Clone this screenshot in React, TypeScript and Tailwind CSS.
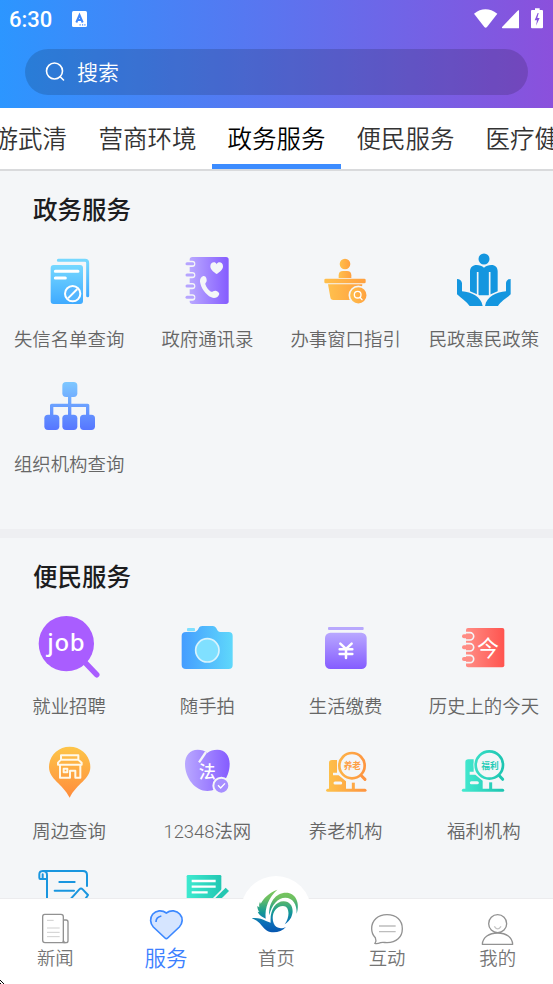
import type { ReactNode } from 'react';

type IconProps = {
  viewBox: string;
  children: ReactNode;
};

type Service = {
  label: string;
  icon: ReactNode;
};

const BG = '#f4f6f8';

const ServiceIcon = ({ viewBox, children }: IconProps) => (
  <svg
    viewBox={viewBox}
    className="size-16 shrink-0"
    fill="none"
  >
    {children}
  </svg>
);

const Gradients = () => (
  <svg
    className="absolute size-0"
    aria-hidden="true"
  >
    <defs>
      <linearGradient id="sky" x1="0" y1="0" x2="0" y2="1">
        <stop offset="0" stopColor="#76d8ff" />
        <stop offset="1" stopColor="#3faaff" />
      </linearGradient>
      <linearGradient id="violet" x1="0" y1="0" x2="1" y2="0">
        <stop offset="0" stopColor="#b9a8ff" />
        <stop offset="1" stopColor="#855cff" />
      </linearGradient>
      <linearGradient id="violetDown" x1="0" y1="0" x2="0" y2="1">
        <stop offset="0" stopColor="#b9a8ff" />
        <stop offset="1" stopColor="#855cff" />
      </linearGradient>
      <linearGradient id="orange" x1="0" y1="0" x2="1" y2="0">
        <stop offset="0" stopColor="#ffc04d" />
        <stop offset="1" stopColor="#ffa03f" />
      </linearGradient>
      <linearGradient id="orangeDown" x1="0" y1="0" x2="0" y2="1">
        <stop offset="0" stopColor="#fdc549" />
        <stop offset="1" stopColor="#ff8c3c" />
      </linearGradient>
      <linearGradient id="orgChart" gradientUnits="userSpaceOnUse" x1="0" y1="66" x2="0" y2="210">
        <stop offset="0" stopColor="#7ec8ff" />
        <stop offset="1" stopColor="#5676ff" />
      </linearGradient>
      <linearGradient id="camera" x1="0" y1="0" x2="1" y2="0">
        <stop offset="0" stopColor="#459dff" />
        <stop offset="1" stopColor="#5fd8fb" />
      </linearGradient>
      <linearGradient id="red" x1="0" y1="0" x2="1" y2="0">
        <stop offset="0" stopColor="#ff8d85" />
        <stop offset="1" stopColor="#ff544f" />
      </linearGradient>
      <linearGradient id="careOrange" gradientUnits="userSpaceOnUse" x1="150" y1="0" x2="270" y2="0">
        <stop offset="0" stopColor="#fdc24b" />
        <stop offset="1" stopColor="#fe9440" />
      </linearGradient>
      <linearGradient id="careTeal" gradientUnits="userSpaceOnUse" x1="558" y1="0" x2="685" y2="0">
        <stop offset="0" stopColor="#45ead0" />
        <stop offset="1" stopColor="#1cc4b0" />
      </linearGradient>
      <linearGradient id="formTeal" gradientUnits="userSpaceOnUse" x1="560" y1="0" x2="688" y2="0">
        <stop offset="0" stopColor="#3eead0" />
        <stop offset="1" stopColor="#1cc0ac" />
      </linearGradient>
      <linearGradient id="logo" gradientUnits="userSpaceOnUse" x1="0" y1="60" x2="0" y2="186">
        <stop offset="0" stopColor="#7cc75c" />
        <stop offset="0.2" stopColor="#6cbf62" />
        <stop offset="0.52" stopColor="#159a94" />
        <stop offset="0.78" stopColor="#0b6fb8" />
        <stop offset="1" stopColor="#0757b0" />
      </linearGradient>
    </defs>
  </svg>
);

const BlacklistIcon = () => (
  <ServiceIcon viewBox="111 207 192 192">
    <path d="M175 241h80q8 0 8 8v98" stroke="url(#sky)" strokeWidth="9" strokeLinecap="round" />
    <rect x="152" y="255" width="97" height="117" rx="9" fill="url(#sky)" />
    <path d="M166 274h68M166 294h30" stroke="#fff" strokeWidth="9" strokeLinecap="round" />
    <circle cx="218" cy="341" r="23" fill="#55b6ff" stroke="#fff" strokeWidth="6" />
    <path d="M204 355l28-28" stroke="#fff" strokeWidth="6" />
  </ServiceIcon>
);

const PhoneBookIcon = () => (
  <ServiceIcon viewBox="526 207 192 192">
    <rect x="570" y="231" width="117" height="141" rx="8" fill="url(#violet)" />
    {[251, 285, 318, 352].map((y) => (
      <g key={y}>
        <rect x="558" y={y - 9} width="29" height="19" rx="9" fill={BG} />
        <path d={`M562 ${y}h17`} stroke="#b6a4ff" strokeWidth="9" strokeLinecap="round" />
      </g>
    ))}
    <path
      d="M651 282c-10-6-19-13-19-23 0-13 15-16 19-6 4-10 19-7 19 6 0 10-9 17-19 23z"
      fill={BG}
    />
    <path
      d="M611 288c7-2 11 8 10 15-1 5-5 6-4 10 3 9 9 17 17 22 5 2 7-4 14-3 7 2 13 7 10 12-4 9-14 12-23 8-18-9-31-28-34-47-1-8 4-15 10-17z"
      fill={BG}
    />
  </ServiceIcon>
);

const CounterIcon = () => (
  <ServiceIcon viewBox="113 207 192 192">
    <g fill="url(#orange)">
      <circle cx="206" cy="252" r="16" />
      <path d="M187 294v-8q0-13 13-13h12q13 0 13 13v8z" />
      <rect x="144" y="296" width="124" height="14" rx="4" />
      <path d="M155 313h103l-5 39q-1 8-9 8h-73q-8 0-9-8z" />
      <circle cx="246" cy="346" r="27" stroke={BG} strokeWidth="5" />
    </g>
    <circle cx="244" cy="344" r="10" stroke="#fff" strokeWidth="4" />
    <path d="M251 352l6 7" stroke="#fff" strokeWidth="4" strokeLinecap="round" />
  </ServiceIcon>
);

const CivilAffairsIcon = () => (
  <ServiceIcon viewBox="528 207 192 192">
    <g fill="#1496df">
      <circle cx="624" cy="237" r="16.500" />
      <path d="M582 334v-60c0-12 8-19 20-19 9 0 16 3 22 8 6-5 13-8 22-8 12 0 19 7 19 19v60l-19 8-9 4h-27l-9-4z" />
      <path d="M543 297q12 0 15 12v25c28 2 57 15 62 44h-39c-10-13-24-22-38-35z" />
      <path d="M704 297q-12 0-14 12v25c-28 2-58 15-63 44h39c8-14 24-22 38-35z" />
    </g>
    <path d="M605 276v70M641 276v70" stroke={BG} strokeWidth="5" />
  </ServiceIcon>
);

const OrgIcon = () => (
  <ServiceIcon viewBox="111 42 192 192">
    <path d="M209 105v65M155 170v-34h108v34" stroke="url(#orgChart)" strokeWidth="10" strokeLinejoin="round" />
    <g fill="url(#orgChart)">
      <rect x="187" y="66" width="45" height="45" rx="11" />
      <rect x="133" y="164" width="45" height="46" rx="11" />
      <rect x="187" y="164" width="45" height="46" rx="11" />
      <rect x="240" y="164" width="45" height="46" rx="11" />
    </g>
  </ServiceIcon>
);

const JobIcon = () => (
  <ServiceIcon viewBox="111 48 192 192">
    <circle cx="199" cy="131" r="83" fill="#a95dff" />
    <path d="M252 184l38 40" stroke="#a95dff" strokeWidth="17" strokeLinecap="round" />
    <text
      x="198"
      y="153"
      textAnchor="middle"
      textLength="112"
      className="fill-white font-['Noto_Sans'] text-[72px] font-medium"
    >
      job
    </text>
  </ServiceIcon>
);

const CameraIcon = () => (
  <ServiceIcon viewBox="526 48 192 192">
    <rect x="562" y="84" width="24" height="10" rx="3" fill="#7fe0ff" />
    <path
      d="M559 96h24c8 0 11-5 14-11 2-5 6-7 11-7h31c6 0 9 3 11 7 3 7 6 11 12 11h25q12 0 12 12v87q0 12-12 12H559q-13 0-13-12v-87q0-12 13-12z"
      fill="url(#camera)"
    />
    <circle cx="623" cy="151" r="35" fill="#80e0ff" stroke="#d8f3fd" strokeWidth="5" />
  </ServiceIcon>
);

const PaymentIcon = () => (
  <ServiceIcon viewBox="113 48 192 192">
    <rect x="155" y="81" width="107" height="9" rx="3" fill="#b8a8fd" />
    <rect x="146" y="98" width="125" height="109" rx="16" fill="url(#violetDown)" />
    <path
      d="M192 131l17 16 17-16M209 147v27M190 148h38M190 162h38"
      stroke="#fff"
      strokeWidth="7.500"
      strokeLinecap="round"
    />
  </ServiceIcon>
);

const HistoryIcon = () => (
  <ServiceIcon viewBox="528 48 192 192">
    <rect x="570" y="84" width="115" height="118" rx="6" fill="url(#red)" />
    {[109, 142, 177].map((y) => (
      <g key={y}>
        <path d={`M568 ${y - 11}h14a11 11 0 0 1 0 22h-14`} stroke={BG} strokeWidth="5" />
        <path d={`M564 ${y}h18`} stroke="#ff8c84" strokeWidth="12" strokeLinecap="round" />
      </g>
    ))}
    <text
      x="636"
      y="168"
      textAnchor="middle"
      className="fill-white font-['Noto_Sans_CJK_SC'] text-[66px] font-normal"
    >
      今
    </text>
  </ServiceIcon>
);

const NearbyIcon = () => (
  <ServiceIcon viewBox="111 33 192 192">
    <path
      d="M209 50c35 0 62 27 62 61 0 37-41 50-62 92-21-42-62-55-62-92 0-34 27-61 62-61z"
      fill="url(#orangeDown)"
    />
    <g stroke="#fff8e8" strokeWidth="6" strokeLinejoin="round">
      <path d="M183 76h52v13h-52zM183 89l-9 9v6h71v-6l-10-9M180 105v38h30v-21h16v21h15v-38" />
      <rect x="191" y="116" width="11" height="11" />
    </g>
  </ServiceIcon>
);

const LawIcon = () => (
  <ServiceIcon viewBox="526 33 192 192">
    <path
      d="M623 69c8-7 18-10 30-10 23 0 37 17 37 43 0 43-31 81-67 81s-67-38-67-81c0-26 15-43 38-43 12 0 21 3 29 10z"
      fill="url(#violet)"
    />
    <path d="M619 66l-21 31" stroke={BG} strokeWidth="7" />
    <text
      x="623"
      y="143"
      textAnchor="middle"
      className="fill-white font-['Noto_Sans_CJK_SC'] text-[51px] font-medium"
    >
      法
    </text>
    <circle cx="665" cy="167" r="24" fill="#a78fff" stroke={BG} strokeWidth="6" />
    <path d="M655 166l8 8 13-14" stroke="#fff" strokeWidth="4" />
  </ServiceIcon>
);

const ElderCareIcon = () => (
  <ServiceIcon viewBox="113 33 192 192">
    <path d="M158 180V98q0-8 9-8h15v38h-12v8h17l22 18v26z" fill="url(#careOrange)" />
    <path d="M154 181h112" stroke="url(#careOrange)" strokeWidth="9" strokeLinecap="round" />
    <path d="M231 158v20" stroke="#fea845" strokeWidth="9" />
    <path d="M176 159h17" stroke={BG} strokeWidth="9" strokeLinecap="round" />
    <circle cx="227" cy="107" r="45" fill={BG} />
    <circle cx="227" cy="107" r="38" stroke="url(#careOrange)" strokeWidth="8" />
    <path d="M256 138l10 10" stroke="#fe9440" strokeWidth="9" strokeLinecap="round" />
    <text
      x="228"
      y="117"
      textAnchor="middle"
      className="fill-[#fea044] font-['Noto_Sans_CJK_SC'] text-[26px] font-bold"
    >
      养老
    </text>
  </ServiceIcon>
);

const WelfareIcon = () => (
  <ServiceIcon viewBox="528 33 192 192">
    <path d="M568 180V96q0-8 9-8h16v37h-12v9h17l22 18v28z" fill="url(#careTeal)" />
    <path d="M562 181h118" stroke="url(#careTeal)" strokeWidth="9" strokeLinecap="round" />
    <path d="M644 157v21" stroke="#2bd0bb" strokeWidth="9" />
    <path d="M586 158h18" stroke={BG} strokeWidth="9" strokeLinecap="round" />
    <circle cx="640" cy="105" r="47" fill={BG} />
    <circle cx="640" cy="105" r="41" stroke="url(#careTeal)" strokeWidth="8" />
    <path d="M670 137l10 11" stroke="#1fc7b2" strokeWidth="9" strokeLinecap="round" />
    <text
      x="642"
      y="117"
      textAnchor="middle"
      className="fill-[#25cbb6] font-['Noto_Sans_CJK_SC'] text-[26px] font-bold"
    >
      福利
    </text>
  </ServiceIcon>
);

const ScrollIcon = () => (
  <ServiceIcon viewBox="111 18 192 192">
    <path
      d="M128 33h121q12 0 12 12v33M141 57h-20q-3 0-3-4V43q0-10 11-10 12 0 12 12v110M128 43v10M178 66h46M164 92h58M211 118l27-30q5-5 10 0l16 17-12 18"
      stroke="#1996df"
      strokeWidth="6"
      strokeLinecap="round"
      strokeLinejoin="round"
    />
  </ServiceIcon>
);

const FormIcon = () => (
  <ServiceIcon viewBox="526 18 192 192">
    <rect x="561" y="45" width="104" height="120" rx="4" fill="url(#formTeal)" />
    <path d="M576 63h72M576 80h72M576 97h48" stroke="#fff" strokeWidth="7" />
    <path d="M683 88l-44 44" stroke={BG} strokeWidth="24" />
    <path d="M683 88l-44 44" stroke="#24c7b1" strokeWidth="14" />
  </ServiceIcon>
);

const govServices: Service[] = [
  { label: '失信名单查询', icon: <BlacklistIcon /> },
  { label: '政府通讯录', icon: <PhoneBookIcon /> },
  { label: '办事窗口指引', icon: <CounterIcon /> },
  { label: '民政惠民政策', icon: <CivilAffairsIcon /> },
  { label: '组织机构查询', icon: <OrgIcon /> },
];

const lifeServices: Service[] = [
  { label: '就业招聘', icon: <JobIcon /> },
  { label: '随手拍', icon: <CameraIcon /> },
  { label: '生活缴费', icon: <PaymentIcon /> },
  { label: '历史上的今天', icon: <HistoryIcon /> },
  { label: '周边查询', icon: <NearbyIcon /> },
  { label: '12348法网', icon: <LawIcon /> },
  { label: '养老机构', icon: <ElderCareIcon /> },
  { label: '福利机构', icon: <WelfareIcon /> },
  { label: '', icon: <ScrollIcon /> },
  { label: '', icon: <FormIcon /> },
];

const tabs = ['营商环境', '政务服务', '便民服务', '医疗健康'];

const StatusBar = () => (
  <div className="flex h-[38px] items-center pl-[9px] pr-[9px] text-white">
    <span className="pt-px font-[Roboto] text-[22px] font-medium leading-none">6:30</span>
    <svg viewBox="0 0 15 16" className="ml-5 h-4 w-[15px]">
      <rect width="15" height="16" rx="1.500" fill="#fff" />
      <path d="M4.300 11.500L7.500 4l3.200 7.500M5.500 9h4" stroke="#4188fa" strokeWidth="2" fill="none" />
      <path d="M7.500 13.800h1.200M10 13.800h1.200M12.300 13.800h1.200" stroke="#4188fa" strokeWidth="1.200" />
    </svg>
    <svg viewBox="594 23 210 66" className="ml-auto h-[22px] w-[70px]" fill="#fff">
      <path d="M594 40q34-26 70 0l-31 40q-4 4-8 0z" />
      <path d="M729 30v54h-49q-4-2-1-5l46-48q2-2 4-1z" />
      <path d="M777 29v-5h14v5h7q3 0 3 3v49q0 3-3 3h-30q-3 0-3-3V32q0-3 3-3z" />
      <path d="M785 38l-9 22h7l-3 16 11-23h-7l4-15z" fill="#8553dd" />
    </svg>
  </div>
);

const ServiceSection = ({ title, services }: { title: string; services: Service[] }) => (
  <section>
    <h2 className="flex h-[78px] items-center pl-[33px] pt-[3px] text-[24.500px] font-medium text-[#1c1d1f]">
      {title}
    </h2>
    <div className="grid grid-cols-4">
      {services.map(({ label, icon }, index) => (
        <div
          key={index}
          className="flex h-[125px] flex-col items-center"
        >
          {icon}
          <span className="whitespace-nowrap text-[18.400px] leading-[54px] text-[#666]">
            {label}
          </span>
        </div>
      ))}
    </div>
  </section>
);

const NavItem = ({ label, active, children }: { label: string; active?: boolean; children: ReactNode }) => (
  <div className="relative flex flex-1 flex-col items-center">
    {children}
    <span
      className={
        active
          ? 'text-[21.500px] leading-8 text-[#3c80ff]'
          : 'text-[18.400px] leading-8 text-[#757575]'
      }
    >
      {label}
    </span>
  </div>
);

const BottomNav = () => (
  <nav className="relative flex h-[86px] shrink-0 border-t border-[#ececee] bg-white">
    <NavItem label="新闻">
      <svg viewBox="111 117 111 132" className="h-11 w-[37px] overflow-visible" fill="none" stroke="#929292" strokeWidth="4">
        <path d="M190 180h8q6 0 6 6v56q0 6-6 6h-4q-5 0-5-6" />
        <path d="M134 163h49q7 0 7 7v71q0 7 7 7h-62q-7 0-7-7v-71q0-7 6-7z" />
        <path d="M141 181h20M141 204h38M141 217h38M141 230h38" stroke="#cfcfcf" strokeWidth="3" />
      </svg>
    </NavItem>
    <NavItem label="服务" active>
      <svg viewBox="441 117 111 132" className="h-11 w-[37px]" fill="none" stroke="#3c88ff">
        <path
          d="M499 159c-13-10-31-8-41 4-9 11-8 27 2 38l35 33q4 4 8 0l35-33c10-11 12-27 2-38-10-12-28-14-41-4z"
          fill="#d6e5ff"
          strokeWidth="5"
        />
        <path d="M468 186c0-10 6-16 16-18" strokeWidth="5" />
      </svg>
    </NavItem>
    <NavItem label="首页">
      <div className="absolute -top-[23px] size-[70px] rounded-full bg-white" />
      <svg viewBox="45 42 156 150" className="relative -mt-[15px] mb-[9px] h-[50px] w-[52px]" fill="url(#logo)">
        <path d="M127 59c-26 10-41 26-50 42l-2-6c-3 7-3 12-2 17l-6-4c0 8 2 13 6 18l-5-1c3 8 9 13 16 17l8 4c-3-34 9-63 35-87z" />
        <path d="M103 136c-3-38 19-68 50-68 29 0 43 30 32 63 1-29-12-48-34-48-22 0-42 22-48 53z" />
        <path d="M50 145c14-3 30 1 43 8l14 5c-3-36 14-64 39-64 25 0 33 27 22 49-5 9-11 15-19 20 16-21 16-55-5-55-24 0-37 28-28 52 6 15 23 19 37 10-13 17-41 21-57 12-15-9-19-28-46-37z" />
      </svg>
    </NavItem>
    <NavItem label="互动">
      <svg viewBox="279 117 111 132" className="h-11 w-[37px] overflow-visible" fill="none" stroke="#929292" strokeWidth="4">
        <path d="M297 250c4-6 4-10 1-17-8-8-11-17-11-27 0-25 19-42 46-42 28 0 46 17 46 42s-18 42-46 42c-7 0-12-2-19 0-6 2-12 4-17 2z" />
        <path d="M309 198h50M309 215h50" stroke="#bdbdbd" />
      </svg>
    </NavItem>
    <NavItem label="我的">
      <svg viewBox="609 117 111 132" className="h-11 w-[37px] overflow-visible" fill="none" stroke="#929292" strokeWidth="4">
        <circle cx="665" cy="191" r="27" />
        <path d="M619 253c1-21 20-34 46-34s44 13 45 34z" strokeLinejoin="round" />
        <path d="M655 199q10 15 20 0" stroke="#c4c4c4" />
      </svg>
    </NavItem>
  </nav>
);

const App = () => (
  <div className="relative flex h-[984px] w-[553px] flex-col overflow-hidden bg-[#f4f6f8] font-[Roboto,'Noto_Sans_CJK_SC',sans-serif] font-[350]">
    <Gradients />
    <header className="h-[108px] shrink-0 bg-linear-to-r/srgb from-[#2c96ff] via-[#5b74ef] to-[#8b50dc]">
      <StatusBar />
      <div className="ml-[25px] mt-[11px] flex h-[46px] w-[503px] items-center rounded-full bg-black/15 pl-5 text-white">
        <svg viewBox="0 0 20 20" className="size-5" fill="none" stroke="currentColor" strokeWidth="1.600" strokeLinecap="round">
          <circle cx="9.500" cy="9" r="8" />
          <path d="M15.200 14.800l3.300 3.200" />
        </svg>
        <span className="ml-3 pt-[3px] text-[21px]">搜索</span>
      </div>
    </header>
    <div className="flex h-[63px] shrink-0 overflow-hidden border-b-2 border-[#d9dadc] bg-white text-[24.500px] text-[#333]">
      <div className="flex w-[83px] shrink-0 items-center justify-end pr-4 pt-1">
        <span className="shrink-0">游武清</span>
      </div>
      {tabs.map((tab) => (
        <div
          key={tab}
          className={
            tab === '政务服务'
              ? 'flex w-[129px] shrink-0 items-center justify-center border-b-[5px] border-[#3c8cff] pt-[9px] text-black'
              : 'flex w-[129px] shrink-0 items-center justify-center pt-1'
          }
        >
          {tab}
        </div>
      ))}
    </div>
    <main className="min-h-0 flex-1 overflow-hidden">
      <ServiceSection title="政务服务" services={govServices} />
      <div className="mt-[30px] h-[9px] bg-[#eeeff2]" />
      <ServiceSection title="便民服务" services={lifeServices} />
    </main>
    <BottomNav />
    <svg viewBox="0 0 5 4" className="absolute bottom-0 left-0 h-1 w-[5px]" shapeRendering="crispEdges">
      <path d="M0 0h1v1H0zM1 1h1v1H1zM2 2h1v1H2zM3 3h1v1H3zM0 3h1v1H0z" fill="#000" />
    </svg>
  </div>
);

export default App;
